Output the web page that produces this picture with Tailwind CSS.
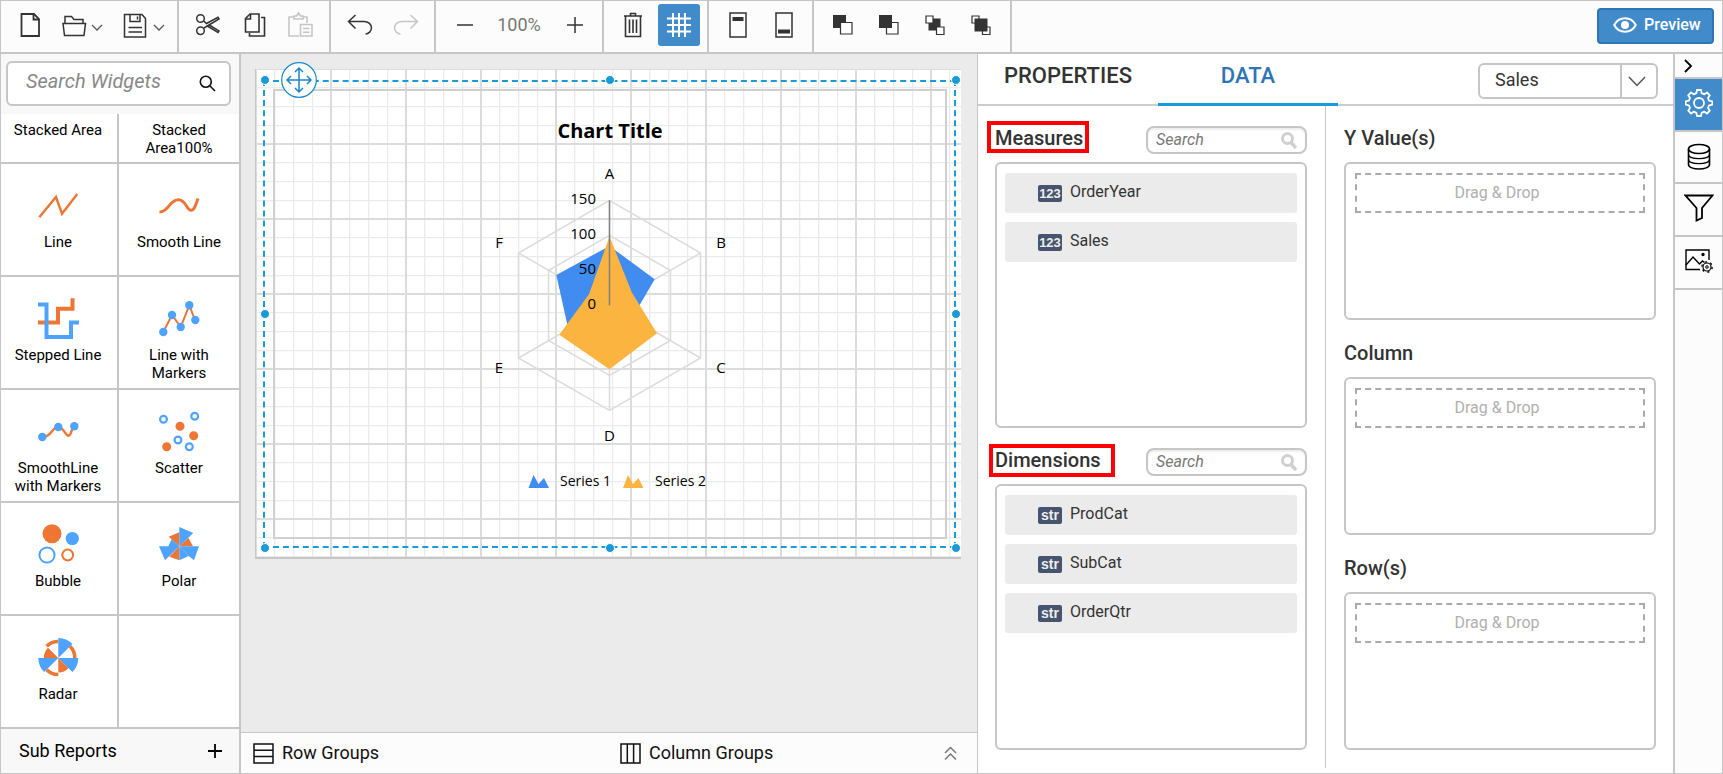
<!DOCTYPE html>
<html lang="en">
<head>
<meta charset="utf-8">
<title>Report Designer</title>
<script src="https://cdn.jsdelivr.net/npm/@tailwindcss/browser@4"></script>
</head>
<body class="flex h-screen flex-col overflow-hidden border border-[#c6c6c6] bg-white font-['Roboto',sans-serif] text-[#333]">

<!-- Toolbar -->
<header class="flex h-[53px] shrink-0 items-stretch border-b-2 border-[#c6c6c6] bg-[#fcfcfc]">
  <div class="flex w-[178px] items-center border-r-2 border-[#c6c6c6] pb-[3px] pl-[6px]">
    <button aria-label="New" class="flex h-11 w-[46px] items-center justify-center"><svg width="26" height="26" fill="none" stroke="#333" stroke-width="1.8"><path d="M4.5 2H17l5 5v17H4.500z"/><path d="M16.500 2v5.500H22"/></svg></button>
    <button aria-label="Open" class="ml-2 flex h-11 items-center"><svg width="26" height="26" fill="none" stroke="#333" stroke-width="1.500"><path d="M4 11.500V4.500h6.500l2.500 3h9v4"/><path d="M2 11.500h22.500L23 23.500H3.500z"/></svg></button>
    <button aria-label="Open options" class="ml-1 flex h-11 items-center"><svg width="12" height="26" fill="none" stroke="#555" stroke-width="1.300"><path d="M1 13l5 5 5-5"/></svg></button>
    <button aria-label="Save" class="ml-5 flex h-11 items-center"><svg width="24" height="26" fill="none" stroke="#333" stroke-width="1.500"><path d="M1.500 2.500H19l3.500 4V25H1.500z"/><path d="M7 2.500v7h10v-7M14.500 4.500v3M5.500 15.500H19M5.500 20H19"/></svg></button>
    <button aria-label="Save options" class="ml-1.5 flex h-11 items-center"><svg width="12" height="26" fill="none" stroke="#555" stroke-width="1.300"><path d="M1 13l5 5 5-5"/></svg></button>
  </div>
  <div class="flex items-center border-r-2 border-[#c6c6c6] px-[6px] pb-[3px]">
    <button aria-label="Cut" class="flex h-11 w-[46px] items-center justify-center"><svg width="26" height="26" fill="none" stroke="#333" stroke-width="1.500"><circle cx="5.500" cy="6.500" r="3.800"/><circle cx="5.500" cy="18.700" r="3.800"/><path d="M8.500 9l3 2.500L23 5.300l1 1.700L9 16M11.500 13.500L23 20.500l1-1.600-10.500-6.400"/></svg></button>
    <button aria-label="Copy" class="flex h-11 w-[46px] items-center justify-center"><svg width="26" height="26" fill="none" stroke="#333" stroke-width="1.600"><path d="M9 2h9v18H4.500V6.500z"/><path d="M9.500 2v5h-5M20 5.500h3.500V24H8.500v-3"/></svg></button>
    <button aria-label="Paste" class="flex h-11 w-[46px] items-center justify-center"><svg width="28" height="28" fill="none" stroke="#c6c6c6" stroke-width="1.600"><path d="M13 25H3V6h5M17 6h4v6"/><path d="M8 8V5h2.500l2-3 2 3H17v3z"/><path d="M14.500 13.500H26V25H14.500zM17 17.500h6.500M17 21.300h6.500"/></svg></button>
  </div>
  <div class="flex items-center border-r-2 border-[#c6c6c6] pr-[5px] pb-[3px] pl-[6px]">
    <button aria-label="Undo" class="flex h-11 w-[46px] items-center justify-center"><svg width="26" height="26" fill="none" stroke="#333" stroke-width="1.500"><path d="M8.500 3L1.500 9.500l7 7M1.500 9.500H17c4.500 0 7.500 3 7.500 6.300S21.500 22 18.500 22"/></svg></button>
    <button aria-label="Redo" class="flex h-11 w-[46px] items-center justify-center"><svg width="26" height="26" fill="none" stroke="#c6c6c6" stroke-width="1.500"><path d="M17.500 3l7 6.500-7 7M24.500 9.500H9C4.500 9.500 1.500 12.500 1.500 15.800S4.500 22 7.500 22"/></svg></button>
  </div>
  <div class="flex items-center border-r-2 border-[#c6c6c6] pr-1 pb-[3px] pl-[6px]">
    <button aria-label="Zoom out" class="flex h-11 w-[46px] items-center justify-center"><svg width="18" height="18" stroke="#333" stroke-width="1.500"><path d="M1 9h16"/></svg></button>
    <span class="w-16 pr-0.5 text-center text-lg leading-6 text-[#777]">100%</span>
    <button aria-label="Zoom in" class="flex h-11 w-[46px] items-center justify-center"><svg width="18" height="18" stroke="#333" stroke-width="1.500"><path d="M1 9h16M9 1v16"/></svg></button>
  </div>
  <div class="flex items-center border-r-2 border-[#c6c6c6] pr-[5px] pb-[3px] pl-[6px]">
    <button aria-label="Delete" class="flex h-11 w-[46px] items-center justify-center"><svg width="20" height="26" fill="none" stroke="#333" stroke-width="1.600"><path d="M1 4h18M2.500 4v20.500h15V4M7.500 3.500V1.500h5v2M6.500 7.500v13.500M10 7.500v13.500M13.500 7.500v13.500"/></svg></button>
    <button aria-label="Toggle grid" class="ml-0.5 flex h-[42px] w-[42px] items-center justify-center rounded-[3px] bg-[#428bca]"><svg width="26" height="26" stroke="#fff" stroke-width="2"><path d="M7 1v24M13 1v24M19 1v24M1 6.500h24M1 13h24M1 19.500h24"/></svg></button>
    <span class="w-0.5"></span>
  </div>
  <div class="flex items-center border-r-2 border-[#c6c6c6] pr-[5px] pb-[3px] pl-[6px]">
    <button aria-label="Header" class="flex h-11 w-[46px] items-center justify-center"><svg width="20" height="26" fill="none" stroke="#333" stroke-width="1.500"><path d="M2 1h16v24H2z"/><path fill="#333" stroke="none" d="M4.500 5h11v4h-11z"/></svg></button>
    <button aria-label="Footer" class="flex h-11 w-[46px] items-center justify-center"><svg width="20" height="26" fill="none" stroke="#333" stroke-width="1.500"><path d="M2 1h16v24H2z"/><path fill="#333" stroke="none" d="M4 17.500h12v4H4z"/></svg></button>
  </div>
  <div class="flex items-center border-r-2 border-[#c6c6c6] px-[6px] pb-[3px]">
    <button aria-label="Send backward" class="flex h-11 w-[46px] items-center justify-center"><svg width="20" height="20"><path fill="#333" d="M0 0h13v13H0z"/><path fill="#fff" stroke="#333" stroke-width="1.200" d="M7.500 7.500h11.500v11.500H7.500z"/></svg></button>
    <button aria-label="Bring forward" class="flex h-11 w-[46px] items-center justify-center"><svg width="20" height="20"><path fill="#fff" stroke="#333" stroke-width="1.200" d="M7.500 7.500h11.500v11.500H7.500z"/><path fill="#333" d="M0 0h13v13H0z"/></svg></button>
    <button aria-label="Send to back" class="flex h-11 w-[46px] items-center justify-center"><svg width="20" height="20"><path fill="#333" d="M3.500 3.500h12v12h-12z"/><path fill="#fff" stroke="#333" stroke-width="1.200" d="M1 1h7v7H1zM11.500 12h7.500v7.500h-7.500z"/></svg></button>
    <button aria-label="Bring to front" class="flex h-11 w-[46px] items-center justify-center"><svg width="20" height="20"><path fill="#fff" stroke="#333" stroke-width="1.200" d="M1 1h7v7H1zM11.500 12h7.500v7.500h-7.500z"/><path fill="#333" d="M3.500 3.500h13v13h-13z"/></svg></button>
  </div>
  <button class="mt-[7px] mr-2 ml-auto flex h-9 w-[117px] items-center gap-[7px] rounded-[4px] border-2 border-[#3075b3] bg-[#428bca] pb-0.5 pl-[14px] text-base font-medium text-white"><svg class="shrink-0" width="24" height="18" fill="none" stroke="#fff" stroke-width="2"><path d="M1.200 9C6 0 18 0 22.800 9 18 18 6 18 1.200 9z"/><circle cx="12" cy="9" r="4" fill="#fff" stroke="none"/></svg>Preview</button>
</header>

<div class="flex min-h-0 flex-1">

  <!-- Widget list -->
  <aside class="flex w-60 shrink-0 flex-col border-r-2 border-[#c6c6c6] bg-[#f8f8f8]">
    <div class="pt-[7px] pr-2 pb-[7px] pl-[5px]">
      <label class="flex h-[45px] items-center rounded-md border-2 border-[#c6c6c6] bg-white pr-[13px] pl-[18px]">
        <input aria-label="Search Widgets" placeholder="Search Widgets" class="mb-1.5 min-w-0 flex-1 text-xl italic outline-none placeholder:text-[#888]">
        <svg width="17" height="17" fill="none" stroke="#111" stroke-width="1.600"><circle cx="6.800" cy="6.800" r="5.500"/><path d="M10.800 10.800l5.200 5.200"/></svg>
      </label>
    </div>
    <div class="mt-px flex min-h-0 flex-1 flex-col bg-white text-[15px] leading-[18px] text-black">
      <div class="flex h-[50px] shrink-0 border-b-2 border-[#c6c6c6] text-center">
        <div class="w-[118px] border-r-2 border-[#c6c6c6] pt-[7px] pr-0.5">Stacked Area</div>
        <div class="flex-1 pt-[7px]">Stacked<br>Area100%</div>
      </div>
      <div class="grid min-h-0 flex-1 grid-cols-[118px_1fr] grid-rows-5 text-center">
        <div class="flex flex-col items-center gap-[7px] border-r-2 border-b-2 border-[#c6c6c6] pt-[21px] pr-0.5">
          <svg class="shrink-0" width="41" height="41" fill="none" stroke="#ed7634" stroke-width="2.400"><path d="M1.300 32.300L18 12l6 16.700L39.300 9"/></svg>Line</div>
        <div class="flex flex-col items-center gap-[7px] border-b-2 border-[#c6c6c6] pt-[21px]">
          <svg class="shrink-0" width="41" height="41" fill="none" stroke="#ed7634" stroke-width="3"><path d="M.5 27C10 27 10 14.800 19.500 14.800 27 14.800 27.500 25.300 32 25.300 35.500 25.300 37 19 39 13.500"/></svg>Smooth Line</div>
        <div class="flex flex-col items-center gap-[7px] border-r-2 border-b-2 border-[#c6c6c6] pt-[21px] pr-0.5">
          <svg class="shrink-0" width="41" height="41" fill="none" stroke-width="4"><path stroke="#ed7634" d="M0 24.500h20V10.700h14.500V.3"/><path stroke="#4da3ff" d="M0 6.500h8.500V39H33V24.500h8"/></svg>Stepped Line</div>
        <div class="flex flex-col items-center gap-[7px] border-b-2 border-[#c6c6c6] pt-[21px]">
          <svg class="shrink-0" width="41" height="41"><path fill="none" stroke="#ed7634" stroke-width="2" d="M4.300 34L13 17l8.700 12 8.600-21.700L36 22"/><g fill="#4da3ff"><circle cx="4.300" cy="34" r="4.200"/><circle cx="13" cy="17" r="4.200"/><circle cx="21.700" cy="29" r="4.200"/><circle cx="30.300" cy="7.300" r="4.200"/><circle cx="36.300" cy="22" r="4.200"/></g></svg><span>Line with<br>Markers</span></div>
        <div class="flex flex-col items-center gap-[7px] border-r-2 border-b-2 border-[#c6c6c6] pt-[21px] pr-0.5">
          <svg class="shrink-0" width="41" height="41"><path fill="none" stroke="#ed7634" stroke-width="2.400" d="M4.300 26C13 27 14 16 20.300 16 26 16 27 24.700 30.700 24.700 33.500 24.700 33 17 36.300 15.300"/><g fill="#4da3ff"><circle cx="4.300" cy="26" r="4.200"/><circle cx="20.300" cy="16" r="4.200"/><circle cx="36.300" cy="15.300" r="4.200"/></g></svg><span>SmoothLine<br>with Markers</span></div>
        <div class="flex flex-col items-center gap-[7px] border-b-2 border-[#c6c6c6] pt-[21px]">
          <svg class="shrink-0" width="41" height="41"><g fill="none" stroke="#4da3ff" stroke-width="2.200"><circle cx="4.500" cy="8.300" r="3.400"/><circle cx="35.700" cy="5.300" r="3.400"/><circle cx="19" cy="29" r="3.400"/><circle cx="30.300" cy="35.700" r="3.400"/></g><g fill="#ed7634"><circle cx="21" cy="15.300" r="4.500"/><circle cx="34.700" cy="24.700" r="4.500"/><circle cx="7.700" cy="35.700" r="4.500"/></g></svg>Scatter</div>
        <div class="flex flex-col items-center gap-[7px] border-r-2 border-b-2 border-[#c6c6c6] pt-[21px] pr-0.5">
          <svg class="shrink-0" width="41" height="41"><circle cx="14" cy="9.700" r="9.500" fill="#ed7634"/><circle cx="34.300" cy="14.500" r="6.600" fill="#4da3ff"/><circle cx="9" cy="31" r="7.600" fill="none" stroke="#4da3ff" stroke-width="2"/><circle cx="29.700" cy="31" r="5.400" fill="none" stroke="#ed7634" stroke-width="2"/></svg>Bubble</div>
        <div class="flex flex-col items-center gap-[7px] border-b-2 border-[#c6c6c6] pt-[21px]">
          <svg class="shrink-0" width="41" height="41"><g fill="#ed7634"><path d="M20.300 22.300l9-8.600 4.700 8.600zM20.300 22.300v14l-10-3.600zM20.300 22.300L9.700 12.700l10.600-4.400z"/></g><g fill="#4da3ff"><path d="M20.300 22.300V3l14 6zM20.300 22.300H40l-5 14-5.300-4.300zM20.300 22.300H0l6 14zM20.300 22.300H9.300l3.400-7z"/></g><path fill="#4da3ff" d="M20.300 22.300v14l9.400-4.300z"/></svg>Polar</div>
        <div class="flex flex-col items-center gap-[7px] border-r-2 border-b-2 border-[#c6c6c6] pt-[21px] pr-0.5">
          <svg class="shrink-0" width="41" height="41"><g fill="#ed7634"><path d="M20.300 21L30.600 31.300A14.500 14.500 0 0 1 20.300 35.500zM20.300 21H5.800A14.500 14.500 0 0 1 10 10.700z"/></g><g fill="none" stroke="#ed7634" stroke-width="3.600"><path d="M8.600 9.300A16.500 16.500 0 0 1 20.300 4.500M32 9.300A16.500 16.500 0 0 1 36.800 21M20.300 37.500A16.500 16.500 0 0 1 8.600 32.700"/></g><g fill="#4da3ff"><path d="M20.300 21V1A20 20 0 0 1 34.400 6.900zM20.300 21h20A20 20 0 0 1 34.400 35.100zM20.300 21L6.200 35.100A20 20 0 0 1 .3 21z"/></g></svg>Radar</div>
        <div class="border-b-2 border-[#c6c6c6]"></div>
      </div>
    </div>
    <div class="flex h-11 shrink-0 items-center justify-between pr-[17px] pl-[18px] text-lg text-black">
      <span>Sub Reports</span>
      <button aria-label="Add sub report" class="flex h-8 items-center"><svg width="14" height="14" stroke="#000" stroke-width="1.800"><path d="M0 7h14M7 0v14"/></svg></button>
    </div>
  </aside>

  <!-- Design surface -->
  <main class="flex min-w-0 flex-1 flex-col bg-[#ebebeb]">
    <div class="min-h-0 flex-1 pt-[15px] pr-4 pl-[14px]">
      <div class="relative h-[490px] border-b-2 border-l border-[#c6c6c6] bg-white">
        <svg class="absolute inset-0 h-full w-full" aria-hidden="true">
          <defs><pattern id="grid" width="75" height="75" patternUnits="userSpaceOnUse">
            <path fill="#ebebeb" d="M18 0h1.300v75H18zM37 0h1.300v75H37zM56 0h1.200v75H56zM0 18h75v1.300H0zM0 37h75v1.300H0zM0 56h75v1.200H0z"/>
            <path fill="#dcdcdc" d="M74 0h1v75h-1zM0 0h1v75H0zM0 74h75v1H0zM0 0h75v1H0z"/>
          </pattern></defs>
          <rect width="100%" height="100%" fill="url(#grid)"/>
        </svg>
        <div class="absolute top-5 right-[14px] bottom-[18px] left-[17px] border-2 border-[#d0d0d0]">
          <svg class="h-full w-full" viewBox="275 91 670 446" font-family="'Open Sans','Noto Sans',sans-serif" font-size="15">
            <g fill="none" stroke="#dcdcdc" stroke-width="1.500">
              <path d="M609.500 200.300L700.500 253v105l-91 52.500-91-52.500V253zM609.500 235.300L670.500 270.500v70l-61 35-61-35v-70z"/>
              <path d="M609.500 200v210M518.500 253l182 105M700.500 253l-182 105"/>
            </g>
            <path fill="#418cf0" d="M609.500 246L654.700 279.300 632 318 609.500 330 568.300 329 556.300 275z"/>
            <path fill="#fcb441" d="M609.500 236.500L632 292.700 657 333.300 609.500 369.300 559.300 334.700 589 294.300z"/>
            <path stroke="#808080" stroke-width="1.500" d="M609.500 200.300v105"/>
            <text x="610" y="138" text-anchor="middle" font-size="20" font-weight="700">Chart Title</text>
            <g text-anchor="middle"><text x="609.500" y="179">A</text><text x="721" y="248">B</text><text x="721" y="373">C</text><text x="609.500" y="441">D</text><text x="499" y="373">E</text><text x="499" y="248">F</text></g>
            <g text-anchor="end"><text x="596" y="204">150</text><text x="596" y="239">100</text><text x="596" y="274">50</text><text x="596" y="309">0</text></g>
            <path fill="#418cf0" d="M528.500 488l5-13 5 9 5.500-6 5 10z"/><path fill="#fcb441" d="M623 488l5-13 5 9 5.500-6 5 10z"/>
            <g font-size="14"><text x="560" y="486">Series 1</text><text x="655" y="486">Series 2</text></g>
          </svg>
        </div>
        <!-- Selection frame with its handles -->
        <div class="absolute top-[11px] right-[5px] bottom-[9px] left-[7px] border-2 border-dashed border-[#1a9bd8]">
          <i class="absolute -top-[7px] -left-[5px] h-2.5 w-2.5 rounded-full border border-white bg-[#1a9bd8]"></i>
          <i class="absolute -top-[7px] left-1/2 h-2.5 w-2.5 -translate-x-1/2 rounded-full border border-white bg-[#1a9bd8]"></i>
          <i class="absolute -top-[7px] -right-[7px] h-2.5 w-2.5 rounded-full border border-white bg-[#1a9bd8]"></i>
          <i class="absolute top-1/2 -left-[5px] h-2.5 w-2.5 -translate-y-1/2 rounded-full border border-white bg-[#1a9bd8]"></i>
          <i class="absolute top-1/2 -right-[7px] h-2.5 w-2.5 -translate-y-1/2 rounded-full border border-white bg-[#1a9bd8]"></i>
          <i class="absolute -bottom-[7px] -left-[5px] h-2.5 w-2.5 rounded-full border border-white bg-[#1a9bd8]"></i>
          <i class="absolute -bottom-[7px] left-1/2 h-2.5 w-2.5 -translate-x-1/2 rounded-full border border-white bg-[#1a9bd8]"></i>
          <i class="absolute -right-[7px] -bottom-[7px] h-2.5 w-2.5 rounded-full border border-white bg-[#1a9bd8]"></i>
          <button aria-label="Move" class="absolute -top-5 left-4"><svg width="36" height="36" fill="none" stroke="#1a87cc" stroke-width="1.200"><circle cx="18" cy="18" r="17.300" fill="#fff"/><path stroke-width="1.500" d="M18 6v24M6 18h24M14 10l4-4 4 4M14 26l4 4 4-4M10 14l-4 4 4 4M26 14l4 4-4 4"/></svg></button>
        </div>
      </div>
    </div>
    <div class="flex h-[41px] shrink-0 items-center border-t border-[#c6c6c6] bg-[#fcfcfc] text-lg text-[#111]">
      <div class="flex w-[367px] items-center gap-2 pl-3"><svg width="21" height="21" fill="none" stroke="#111" stroke-width="1.500"><path d="M1 1h19v19H1zM1 7.300h19M1 13.600h19"/></svg>Row Groups</div>
      <div class="flex items-center gap-2 pl-3"><svg width="21" height="21" fill="none" stroke="#111" stroke-width="1.500"><path d="M1 1h19v19H1zM7.300 1v19M13.600 1v19"/></svg>Column Groups</div>
      <button aria-label="Expand groups" class="mr-5 ml-auto"><svg width="13" height="15" fill="none" stroke="#777" stroke-width="1.500"><path d="M1 7l5.500-5.500L12 7M1 13.500L6.500 8l5.500 5.500"/></svg></button>
    </div>
  </main>

  <!-- Data panel -->
  <section class="flex w-[696px] shrink-0 flex-col border-l border-[#c6c6c6] bg-white">
    <div class="flex h-[52px] shrink-0 items-stretch border-b-2 border-[#ccc]">
      <button class="w-[180px] pb-[7px] text-[22px] leading-7 font-medium">PROPERTIES</button>
      <button class="-mb-0.5 w-[180px] border-b-[3px] border-[#1a9bd8] pb-[6px] text-[22px] leading-7 font-medium text-[#2e75b6]">DATA</button>
      <div class="relative mt-[9px] mr-[15px] ml-auto h-9 w-[180px]">
        <select aria-label="Data set" class="h-full w-full appearance-none rounded-md border-2 border-[#c6c6c6] bg-white pb-0.5 pl-[15px] text-lg text-[#333]"><option>Sales</option></select>
        <span class="pointer-events-none absolute inset-y-0.5 right-0.5 flex w-9 items-center justify-center border-l-2 border-[#c6c6c6] pr-1"><svg width="18" height="11" fill="none" stroke="#555" stroke-width="1.500"><path d="M1 1l8 8.500L17 1"/></svg></span>
      </div>
    </div>
    <div class="flex min-h-0 flex-1">
      <div class="mb-[5px] flex w-[348px] flex-col border-r border-[#c6c6c6] pt-5 pr-[18px] pb-[18px] pl-[17px]">
        <div class="mb-2 flex h-7 shrink-0 justify-between">
          <h2 class="relative self-start text-xl leading-6 font-medium">Measures<span class="absolute -top-[5px] -right-[6px] -bottom-[3px] -left-2 border-4 border-[#ff0000]"></span></h2>
          <label class="flex w-[161px] items-center rounded-lg border-2 border-[#c6c6c6] pr-2 pl-2 shadow-[inset_0_2px_2px_#eee]"><input aria-label="Search measures" placeholder="Search" class="min-w-0 flex-1 text-base italic outline-none placeholder:text-[#777]"><svg width="16" height="17" fill="none" stroke="#d0d0d0" stroke-width="3"><circle cx="6.500" cy="6.500" r="5"/><path stroke-width="3.500" d="M10 10.500l5 5.500"/></svg></label>
        </div>
        <ul class="flex min-h-0 flex-1 flex-col gap-[9px] rounded-md border-2 border-[#c6c6c6] px-2 pt-[9px]">
          <li class="flex h-10 items-start rounded-[3px] bg-[#ebebeb] pt-3 pl-[33px]"><b class="h-[17px] w-6 rounded-[2px] bg-[#46546f] text-center font-['Liberation_Sans',sans-serif] text-[13px] leading-[17px] text-[#eee]">123</b><span class="-mt-[3px] ml-2 text-base leading-5">OrderYear</span></li>
          <li class="flex h-10 items-start rounded-[3px] bg-[#ebebeb] pt-3 pl-[33px]"><b class="h-[17px] w-6 rounded-[2px] bg-[#46546f] text-center font-['Liberation_Sans',sans-serif] text-[13px] leading-[17px] text-[#eee]">123</b><span class="-mt-[3px] ml-2 text-base leading-5">Sales</span></li>
        </ul>
        <div class="mt-5 mb-2 flex h-7 shrink-0 justify-between">
          <h2 class="relative self-start text-xl leading-6 font-medium">Dimensions<span class="absolute -top-1 -right-[14px] -bottom-[5px] -left-1.5 border-4 border-[#ff0000]"></span></h2>
          <label class="flex w-[161px] items-center rounded-lg border-2 border-[#c6c6c6] pr-2 pl-2 shadow-[inset_0_2px_2px_#eee]"><input aria-label="Search dimensions" placeholder="Search" class="min-w-0 flex-1 text-base italic outline-none placeholder:text-[#777]"><svg width="16" height="17" fill="none" stroke="#d0d0d0" stroke-width="3"><circle cx="6.500" cy="6.500" r="5"/><path stroke-width="3.500" d="M10 10.500l5 5.500"/></svg></label>
        </div>
        <ul class="flex min-h-0 flex-1 flex-col gap-[9px] rounded-md border-2 border-[#c6c6c6] px-2 pt-[9px]">
          <li class="flex h-10 items-start rounded-[3px] bg-[#ebebeb] pt-3 pl-[33px]"><b class="h-[17px] w-6 rounded-[2px] bg-[#46546f] text-center font-['Liberation_Sans',sans-serif] text-[14px] leading-[17px] text-[#eee]">str</b><span class="-mt-[3px] ml-2 text-base leading-5">ProdCat</span></li>
          <li class="flex h-10 items-start rounded-[3px] bg-[#ebebeb] pt-3 pl-[33px]"><b class="h-[17px] w-6 rounded-[2px] bg-[#46546f] text-center font-['Liberation_Sans',sans-serif] text-[14px] leading-[17px] text-[#eee]">str</b><span class="-mt-[3px] ml-2 text-base leading-5">SubCat</span></li>
          <li class="flex h-10 items-start rounded-[3px] bg-[#ebebeb] pt-3 pl-[33px]"><b class="h-[17px] w-6 rounded-[2px] bg-[#46546f] text-center font-['Liberation_Sans',sans-serif] text-[14px] leading-[17px] text-[#eee]">str</b><span class="-mt-[3px] ml-2 text-base leading-5">OrderQtr</span></li>
        </ul>
      </div>
      <div class="flex min-w-0 flex-1 flex-col pt-5 pr-[17px] pb-[23px] pl-[18px]">
        <h2 class="mb-2 h-7 text-xl leading-6 font-medium">Y Value(s)</h2>
        <div class="min-h-0 flex-1 rounded-md border-2 border-[#c6c6c6] px-[9px] pt-[9px]"><div class="h-10 border-2 border-dashed border-[#aaa] pr-[6px] text-center text-base leading-9 text-[#b0b0b0]">Drag &amp; Drop</div></div>
        <h2 class="mt-[21px] mb-2 h-7 text-xl leading-6 font-medium">Column</h2>
        <div class="min-h-0 flex-1 rounded-md border-2 border-[#c6c6c6] px-[9px] pt-[9px]"><div class="h-10 border-2 border-dashed border-[#aaa] pr-[6px] text-center text-base leading-9 text-[#b0b0b0]">Drag &amp; Drop</div></div>
        <h2 class="mt-[21px] mb-2 h-7 text-xl leading-6 font-medium">Row(s)</h2>
        <div class="min-h-0 flex-1 rounded-md border-2 border-[#c6c6c6] px-[9px] pt-[9px]"><div class="h-10 border-2 border-dashed border-[#aaa] pr-[6px] text-center text-base leading-9 text-[#b0b0b0]">Drag &amp; Drop</div></div>
      </div>
    </div>
  </section>

  <!-- Side rail -->
  <nav class="flex w-[49px] shrink-0 flex-col border-l-2 border-[#c6c6c6] bg-[#fcfcfc]">
    <button aria-label="Collapse panel" class="flex h-[25px] items-center border-b-2 border-[#c6c6c6] pl-[9px]"><svg width="9" height="14" fill="none" stroke="#000" stroke-width="1.800"><path d="M1 1l6 6-6 6"/></svg></button>
    <button aria-label="Properties" class="flex h-[53px] items-center justify-center border-b-2 border-[#c6c6c6] bg-[#428bca] pb-[3px]"><svg width="28" height="28" viewBox="-14 -14 28 28" fill="none" stroke="#fff" stroke-width="1.800" stroke-linejoin="round"><path d="M-2 -13h4l.6 3.200 2.700 1.100 2.700-1.800 2.800 2.800-1.800 2.700 1.100 2.700 3.200.6v3.400l-3.200.6-1.100 2.700 1.800 2.700-2.800 2.800-2.700-1.800-2.700 1.100L2 13h-4l-.6-3.200-2.700-1.100-2.700 1.800-2.800-2.800 1.800-2.700-1.100-2.700-3.200-.6v-3.400l3.200-.6 1.100-2.700-1.800-2.700 2.800-2.800 2.700 1.800 2.700-1.100z"/><circle r="5"/></svg></button>
    <button aria-label="Data" class="flex h-[52px] items-center justify-center border-b-2 border-[#c6c6c6]"><svg width="24" height="28" fill="none" stroke="#000" stroke-width="1.600"><ellipse cx="12" cy="6" rx="10.500" ry="4.500"/><path d="M1.500 6v15.500c0 6 21 6 21 0V6"/><path stroke-width="1.200" d="M1.500 11.500c0 5.500 21 5.500 21 0M1.500 16.500c0 5.500 21 5.500 21 0"/></svg></button>
    <button aria-label="Filter" class="flex h-[53px] items-center justify-center border-b-2 border-[#c6c6c6] pb-[3px]"><svg width="30" height="28" fill="none" stroke="#000" stroke-width="1.800"><path d="M1.500 1.500h27L18 14v10l-5.500 2.500V14z"/></svg></button>
    <button aria-label="Image settings" class="flex h-[53px] items-center justify-center border-b-2 border-[#c6c6c6] pb-[3px]"><svg width="30" height="26" fill="none" stroke="#000" stroke-width="1.400"><path d="M16 21.500H2V2h23v10"/><path d="M2 17l7-8 6.500 7 3-3 2 1.500"/><circle cx="19" cy="6.500" r="1" fill="#000"/><circle cx="23" cy="19" r="4" stroke-width="1.200"/><circle cx="23" cy="19" r="1.300" stroke-width="1"/><circle cx="23" cy="19" r="5.200" stroke-width="1.300" stroke-dasharray="2.200 3.240"/></svg></button>
  </nav>
</div>
</body>
</html>
